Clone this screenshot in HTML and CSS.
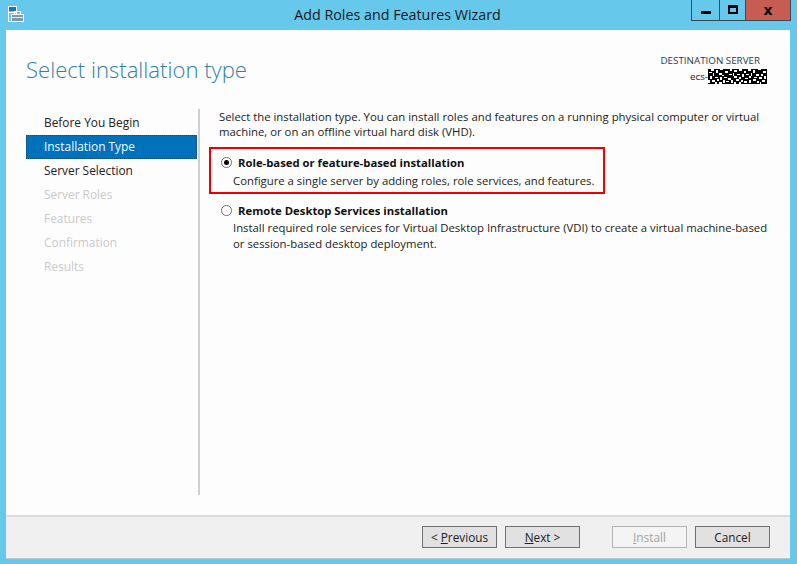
FILE: index.html
```html
<!DOCTYPE html>
<html lang="en">
<head>
<meta charset="utf-8">
<title>Add Roles and Features Wizard</title>
<link rel="stylesheet" href="styles.css">
</head>
<body>
<div class="titlebar">
  <svg class="app-icon" width="17" height="17" viewBox="0 0 17 17" shape-rendering="crispEdges">
    <rect x="0.5" y="0.5" width="8" height="15" fill="#66c9ec" stroke="#fff"/>
    <rect x="1" y="1" width="7" height="4" fill="#1e73b8"/>
    <rect x="1" y="6" width="7" height="1" fill="#fff"/>
    <rect x="6" y="5.5" width="6" height="3" fill="none" stroke="#fff"/>
    <rect x="3.5" y="8.5" width="12" height="7" fill="#8098aa" stroke="#fff"/>
    <rect x="4" y="11" width="11" height="1" fill="#dfe8ee"/>
  </svg>
  <div class="title">Add Roles and Features Wizard</div>
  <div class="controls">
    <div class="ctrl ctrl-min"><span class="min-glyph"></span></div>
    <div class="ctrl ctrl-max"><span class="max-glyph"></span></div>
    <div class="ctrl ctrl-close">x</div>
  </div>
</div>
<div class="window">
  <div class="main">
    <header class="header">
      <h1 class="heading">Select installation type</h1>
      <div class="dest">
        <div class="dest-label">DESTINATION SERVER</div>
        <div class="dest-name">ecs-<svg class="redact" width="59" height="15" viewBox="0 0 59 15" shape-rendering="crispEdges"><rect width="59" height="15" fill="#000"/><path fill="#fff" d="M3 0h3v2H3zM8 1h2v3H8zM12 0h3v1h-3zM17 2h3v2h-3zM22 0h2v2h-2zM26 1h3v2h-3zM31 0h3v2h-3zM36 2h2v2h-2zM40 0h3v2h-3zM45 1h2v3h-2zM50 0h3v1h-3zM55 2h3v2h-3zM1 3h3v1H1zM5 4h1v3H5zM11 4h3v2h-3zM14 6h2v1h-2zM21 5h3v1h-3zM25 4h1v3h-1zM29 5h3v1h-3zM34 5h2v3h-2zM38 5h3v1h-3zM43 4h1v3h-1zM48 5h3v2h-3zM53 5h2v2h-2zM2 7h2v3H2zM7 8h3v1H7zM12 8h2v3h-2zM16 8h3v1h-3zM20 9h3v2h-3zM26 7h3v2h-3zM31 8h2v2h-2zM37 9h3v1h-3zM41 7h2v2h-2zM46 8h3v1h-3zM51 8h3v2h-3zM56 7h2v3h-2zM0 11h2v3H0zM4 11h3v2H4zM9 10h2v2H9zM15 11h2v3h-2zM18 12h3v1h-3zM23 11h2v3h-2zM28 10h3v2h-3zM33 11h2v2h-2zM36 12h3v2h-3zM41 11h2v3h-2zM45 10h3v2h-3zM49 12h2v2h-2zM54 11h3v2h-3zM7 13h2v2H7zM11 13h3v2h-3zM26 13h2v2h-2zM31 13h2v2h-2zM52 13h1v2h-1z"/></svg></div>
      </div>
    </header>
    <div class="body">
      <nav class="nav">
        <div class="nav-item">Before You Begin</div>
        <div class="nav-item active">Installation Type</div>
        <div class="nav-item">Server Selection</div>
        <div class="nav-item off">Server Roles</div>
        <div class="nav-item off">Features</div>
        <div class="nav-item off">Confirmation</div>
        <div class="nav-item off">Results</div>
      </nav>
      <section class="content">
        <p class="intro">Select the installation type. You can install roles and features on a running physical computer or virtual machine, or on an offline virtual hard disk (VHD).</p>
        <div class="option highlighted">
          <div class="opt-title"><span class="radio checked"></span>Role-based or feature-based installation</div>
          <div class="opt-desc">Configure a single server by adding roles, role services, and features.</div>
        </div>
        <div class="option">
          <div class="opt-title"><span class="radio"></span>Remote Desktop Services installation</div>
          <div class="opt-desc">Install required role services for Virtual Desktop Infrastructure (VDI) to create a virtual machine-based or session-based desktop deployment.</div>
        </div>
      </section>
    </div>
  </div>
  <footer class="footer">
    <button class="btn">&lt; <u>P</u>revious</button>
    <button class="btn"><u>N</u>ext &gt;</button>
    <button class="btn disabled gap-left"><u>I</u>nstall</button>
    <button class="btn">Cancel</button>
  </footer>
</div>
</body>
</html>
```
FILE: styles.css
```css
* { box-sizing: border-box; }
html, body { margin: 0; height: 100%; }
body {
  width: 797px;
  height: 564px;
  overflow: hidden;
  background: #66c9ec;
  font-family: "Open Sans", "Noto Sans", sans-serif;
  font-size: 12px;
  color: #222;
  display: flex;
  flex-direction: column;
  padding: 0 7px 6px 6px;
}
.titlebar {
  height: 30px;
  flex: none;
  display: flex;
  position: relative;
  justify-content: center;
  margin: 0 -7px 0 -6px;
}
.app-icon { position: absolute; left: 8px; top: 6px; }
.title { font-size: 14.3px; line-height: 30px; color: #1a1a1a; padding-right: 2px; }
.controls {
  position: absolute;
  right: 6px;
  top: 0;
  height: 21px;
  display: flex;
  border: 1px solid #3d4a55;
  border-top: 0;
}
.ctrl { display: flex; align-items: center; justify-content: center; height: 20px; }
.ctrl-min { width: 28px; border-right: 1px solid #3d4a55; }
.ctrl-max { width: 26px; border-right: 1px solid #3d4a55; }
.ctrl-close { width: 44px; background: #c75c52; font: bold 14px/18px "DejaVu Sans", sans-serif; color: #000; }
.min-glyph { width: 10px; height: 3px; background: #000; margin-top: 5px; }
.max-glyph { width: 10px; height: 9px; border: 2px solid #000; border-top-width: 3px; margin-top: -1px; }
.window {
  flex: 1;
  min-height: 0;
  background: #fdfdfd;
  display: flex;
  flex-direction: column;
  box-shadow: 0 -1px 0 #8fb5c6;
}
.main { flex: 1; display: flex; flex-direction: column; min-height: 0; }
.header {
  height: 79px;
  flex: none;
  display: flex;
  justify-content: space-between;
  padding: 22px 23px 0 20px;
}
.heading {
  margin: 0;
  font-size: 22.1px;
  line-height: 34px;
  font-weight: 300;
  color: #2f7f9f;
}
.dest { text-align: right; font-size: 9.8px; color: #222; padding-top: 3px; }
.dest-label { line-height: 12px; color: #2b3a4a; padding-right: 7px; }
.dest-name { display: flex; justify-content: flex-end; align-items: center; line-height: 15px; margin-top: 2px; }
.redact { display: block; }
.body { height: 386px; flex: none; display: flex; padding-left: 20px; }
.nav {
  width: 172px;
  flex: none;
  border-right: 2px solid #cfcfcf;
  padding: 2px 0 0;
  box-sizing: content-box;
}
.nav-item { height: 24px; line-height: 23px; padding-left: 18px; font-size: 11.9px; color: #222; width: 171px; }
.nav-item.active { background: #0072bc; color: #f4fbff; outline: 1px dotted #0a4f80; outline-offset: -1px; }
.nav-item.off { color: #c9c9c9; }
.content { flex: 1; padding: 0 0 0 19px; min-width: 0; }
.intro { margin: 0 0 8px; line-height: 15px; font-size: 11.33px; width: 556px; color: #222; }
.option { margin-left: 2px; width: 548px; }
.option.highlighted {
  width: 396px;
  margin: 0 0 8px -10px;
  border: 2px solid #ee0000;
  padding: 5px 0 0 10px;
  height: 47px;
}
.opt-title { display: flex; align-items: center; font-weight: 700; font-size: 11.3px; line-height: 17px; color: #111; }
.opt-desc { padding-left: 12px; font-size: 11.33px; line-height: 16px; margin-top: 1px; color: #222; }
.highlighted .opt-desc { margin-top: 2px; }
.radio {
  width: 11px;
  height: 11px;
  border: 1px solid #6e6e6e;
  border-radius: 50%;
  background: #fff;
  margin-right: 6px;
  flex: none;
  position: relative;
}
.radio.checked::after {
  content: "";
  position: absolute;
  left: 2px;
  top: 2px;
  width: 5px;
  height: 5px;
  border-radius: 50%;
  background: #000;
}
.footer {
  flex: none;
  height: 43px;
  background: #f0f0f0;
  border-top: 2px solid #dcdcdc;
  box-shadow: 0 1px 0 #b9c9d0;
  display: flex;
  align-items: center;
  justify-content: flex-end;
  gap: 8px;
  padding: 0 20px 2px 0;
}
.btn {
  width: 75px;
  height: 22px;
  background: #e1e1e1;
  border: 1px solid #707070;
  font-family: inherit;
  font-size: 11.8px;
  line-height: 18px;
  color: #222;
  padding: 0;
}
.btn.disabled { background: #f4f4f4; border-color: #b0b4b6; color: #a3a3a3; }
.gap-left { margin-left: 24px; }
```
